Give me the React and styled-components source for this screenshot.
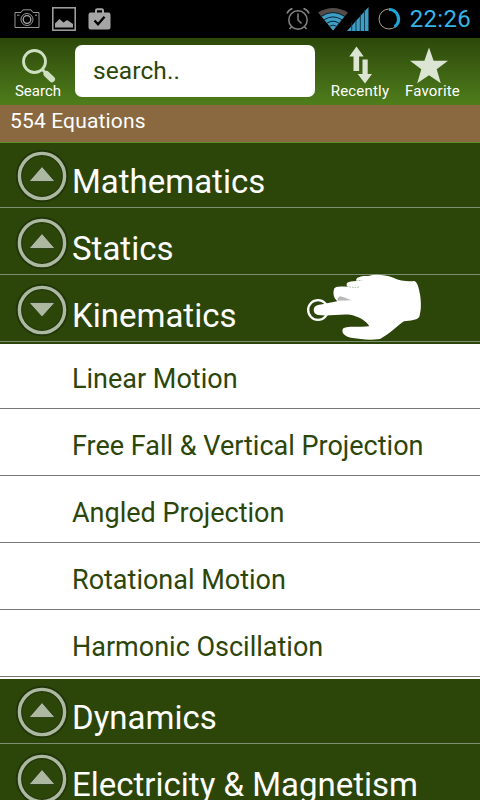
import React, { useState } from 'react';
import styled, { createGlobalStyle } from 'styled-components';

const topics = [
  { name: 'Mathematics', items: [] },
  { name: 'Statics', items: [] },
  {
    name: 'Kinematics',
    items: [
      'Linear Motion',
      'Free Fall & Vertical Projection',
      'Angled Projection',
      'Rotational Motion',
      'Harmonic Oscillation',
    ],
  },
  { name: 'Dynamics', items: [] },
  { name: 'Electricity & Magnetism', items: [] },
];

const CameraIcon = () => (
  <svg width="26" height="20" viewBox="0 0 26 20" fill="none" stroke="#a8a8a8">
    <path d="M1 3.5h6l2-2.7h8l2 2.7h6v15H1z" strokeWidth="0.9" />
    <circle cx="13" cy="10.5" r="6" strokeWidth="0.9" />
    <circle cx="13" cy="10.5" r="3.8" strokeWidth="1.3" />
    <path d="M3 6.2h2.5M21 6.2h2" strokeWidth="0.9" />
  </svg>
);

const GalleryIcon = () => (
  <svg width="24" height="24" viewBox="0 0 24 24">
    <rect x="0.8" y="0.8" width="22.4" height="22.4" fill="none" stroke="#a5a5a5" strokeWidth="1.5" />
    <path d="M3 20.5v-4l4.5-4.5 4 3.5 3.500-2.500 6 4v3.500z" fill="#a5a5a5" />
  </svg>
);

const BagIcon = () => (
  <svg width="23" height="22" viewBox="0 0 23 22">
    <path d="M8 5V2.5q0-1.2 1.2-1.2h4.6q1.2 0 1.2 1.2V5" fill="none" stroke="#a5a5a5" strokeWidth="2" />
    <rect x="0.5" y="4.5" width="22" height="17" rx="2.2" fill="#a5a5a5" />
    <path d="M6.5 12.5l3.5 3.7 6.5-7.5" fill="none" stroke="#000" strokeWidth="2.4" />
  </svg>
);

const AlarmIcon = () => (
  <svg width="24" height="24" viewBox="0 0 24 24" fill="none" stroke="#858585" strokeWidth="1.5">
    <circle cx="12" cy="13" r="9.2" />
    <path d="M12 6.5V13l3.5 3.5" />
    <path d="M1 6.5Q2.5 2.8 6.5 1.5M23 6.5Q21.5 2.8 17.5 1.5M5.8 19.5L3.5 22M18.2 19.5L20.5 22" />
  </svg>
);

const WifiIcon = () => (
  <svg width="30" height="24" viewBox="0 0 30 24" fill="none">
    <path d="M0 5.500Q15-3.500 30 5.500L15 23.500z" fill="#554b48" />
    <path d="M3.700 9.500Q15 2 26.300 9.500L15 23.500z" fill="#3d9dc4" />
    <path
      d="M3 9.500Q15 1.500 27 9.500M6 12.800Q15 7 24 12.800M9 16.200Q15 12.200 21 16.200M11.500 19.200Q15 17 18.500 19.200"
      stroke="#07222e"
      strokeWidth="1"
    />
  </svg>
);

const SignalIcon = () => (
  <svg width="22" height="24" viewBox="0 0 22 24">
    <path d="M0 24L21.5 0v24z" fill="#3d9dc4" />
    <path d="M4.7 15v9M9 12v12M13.3 7v17M17.5 3v21" stroke="#0b3346" strokeWidth="0.9" />
  </svg>
);

const BatteryIcon = () => (
  <svg width="24" height="24" viewBox="0 0 24 24" fill="none">
    <circle cx="12" cy="12" r="10" stroke="#a99f8e" strokeWidth="1" />
    <path d="M12 2.5A9.5 9.5 0 0 1 17.5 19.7" stroke="#1da4d8" strokeWidth="3.2" />
  </svg>
);

const SearchIcon = () => (
  <svg width="36" height="36" viewBox="0 0 36 36" fill="none">
    <circle cx="14.5" cy="13.500" r="11" stroke="#cfe0c2" strokeWidth="2.8" />
    <path d="M22 21l4 4.500" stroke="#cfe0c2" strokeWidth="2.8" />
    <path d="M26.500 26l5.500 5.200" stroke="#cfe0c2" strokeWidth="6" strokeLinecap="round" />
  </svg>
);

const RecentIcon = () => (
  <svg width="24" height="38" viewBox="0 0 24 38" fill="#dce5d3">
    <path d="M8.5 0.5l7.2 10h-4.6v14.500H5.500V10.500H1.300zM14.500 13.500h5.200v14.500h4.300L17 37.500 9.700 28h4.800z" />
  </svg>
);

const StarIcon = () => (
  <svg width="40" height="38" viewBox="0 0 40 38" fill="#dce5d3">
    <path d="M20 1.500l4.600 13.200H39L27.700 23.200l4.100 14.100L20 29.200 8.200 37.300l4.100-14.100L1 14.700h14.400z" />
  </svg>
);

const ToggleIcon = ({ open }) => (
  <svg width="54" height="54" viewBox="0 0 54 54">
    <circle cx="27" cy="27" r="23" fill="none" stroke="#1b2c0b" strokeWidth="6.5" opacity="0.6" />
    <circle cx="27" cy="27" r="22.600" fill="none" stroke="#adb8a0" strokeWidth="3.4" />
    <path
      d={open ? 'M14 19.500h26L27 34z' : 'M14 32.500h26L27 17.500z'}
      fill="#adb8a0"
      stroke="#1f3310"
      strokeWidth="0.8"
    />
  </svg>
);

const Hand = () => (
  <svg width="117" height="69" viewBox="45 24 351 207">
    <circle cx="84" cy="135" r="29.5" fill="none" stroke="#fff" strokeWidth="7" />
    <path
      d="M84 120C101 119 120 112 142 109C132 100 128 88 132 73C134 65 145 64 172 65C165 54 174 49 198 48C198 36 212 32 235 33C255 27 282 29 310 38C332 48 350 50 373 48C383 52 386 68 390 88C394 115 394 135 388 155C381 166 361 166 342 169C325 179 300 207 270 222C235 227 210 222 188 219C164 217 151 202 160 190C177 181 212 188 238 184C228 164 200 153 181 149C150 146 118 154 84 150C67 147 67 123 84 120Z"
      fill="#fff"
    />
    <path d="M142 107Q143 96 151 94Q168 99 184 106Q164 106 142 107Z" fill="#b8b8b8" />
    <path d="M170 64Q190 69 209 66M198 47L216 46" fill="none" stroke="#8c9a80" strokeWidth="2" strokeDasharray="5 3" />
  </svg>
);

const App = () => {
  const [openTopic, setOpenTopic] = useState('Kinematics');

  const handleToggle = (name) => {
    setOpenTopic(openTopic === name ? null : name);
  };

  return (
    <>
      <GlobalStyle />
      <Screen>
        <StatusBar>
          <Notifications>
            <CameraIcon />
            <GalleryIcon />
            <BagIcon />
          </Notifications>
          <SystemIcons>
            <AlarmIcon />
            <Connection>
              <WifiIcon />
              <SignalIcon />
            </Connection>
            <BatteryIcon />
            <Clock>22:26</Clock>
          </SystemIcons>
        </StatusBar>
        <Toolbar>
          <ToolButton $width={76}>
            <SearchIcon />
            <ToolLabel>Search</ToolLabel>
          </ToolButton>
          <SearchInput placeholder="search.." />
          <ToolButton $width={90}>
            <RecentIcon />
            <ToolLabel $spacing={0.2}>Recently</ToolLabel>
          </ToolButton>
          <ToolButton $width={55}>
            <StarIconWrapper>
              <StarIcon />
            </StarIconWrapper>
            <ToolLabel $spacing={0.2}>Favorite</ToolLabel>
          </ToolButton>
        </Toolbar>
        <Counter>554 Equations</Counter>
        <List>
          {topics.map(({ name, items }, index) => {
            const open = openTopic === name;
            const first = index === 0 || openTopic === topics[index - 1].name;
            return (
              <React.Fragment key={name}>
                <Topic $first={first} onClick={() => handleToggle(name)}>
                  <ToggleIcon open={open} />
                  <TopicName>{name}</TopicName>
                  {name === 'Kinematics' && (
                    <Pointer>
                      <Hand />
                    </Pointer>
                  )}
                </Topic>
                {open && items.length > 0 && (
                  <SubList>
                    {items.map((item) => (
                      <SubItem key={item}>{item}</SubItem>
                    ))}
                  </SubList>
                )}
              </React.Fragment>
            );
          })}
        </List>
      </Screen>
    </>
  );
};

export default App;

const GlobalStyle = createGlobalStyle`
  * {
    box-sizing: border-box;
  }

  body {
    margin: 0;
    overflow: hidden;
    font-family: Roboto, 'Noto Sans', sans-serif;
  }

  svg {
    display: block;
    flex-shrink: 0;
  }
`;

const Screen = styled.main`
  display: flex;
  flex-direction: column;
  width: 480px;
  height: 800px;
  overflow: hidden;
  background-color: #2c4509;
`;

const StatusBar = styled.header`
  display: flex;
  justify-content: space-between;
  flex-shrink: 0;
  height: 38px;
  padding: 0 9px 0 14px;
  background-color: #000;
`;

const Notifications = styled.div`
  display: flex;
  align-items: center;
  gap: 12px;
`;

const SystemIcons = styled.div`
  display: flex;
  align-items: center;
  gap: 8px;
`;

const Connection = styled.div`
  display: flex;
  padding-bottom: 1px;

  svg + svg {
    margin-left: -1px;
  }
`;

const Clock = styled.span`
  padding-left: 1px;
  font-size: 24px;
  letter-spacing: 0.3px;
  color: #35b4e5;
`;

const Toolbar = styled.nav`
  display: flex;
  flex-shrink: 0;
  height: 67px;
  background: linear-gradient(#2d480b, #4f7d1b);
`;

const ToolButton = styled.div`
  display: flex;
  flex-direction: column;
  align-items: center;
  justify-content: flex-end;
  width: ${(props) => props.$width}px;
  height: 61px;
`;

const StarIconWrapper = styled.div`
  padding-right: 8px;
`;

const ToolLabel = styled.span`
  margin-top: -1px;
  font-size: 15px;
  line-height: 16px;
  letter-spacing: ${(props) => props.$spacing || 0}px;
  color: #fff;
`;

const SearchInput = styled.input`
  width: 240px;
  height: 52px;
  margin: 7px 0 0 -1px;
  padding: 0 18px 2px;
  border: none;
  border-radius: 7px;
  background-color: #fff;
  font-family: inherit;
  font-size: 24.5px;
  letter-spacing: 0.1px;

  &::placeholder {
    color: #2c4509;
    opacity: 1;
  }
`;

const Counter = styled.div`
  flex-shrink: 0;
  height: 38px;
  padding-left: 10px;
  border-bottom: 1px solid #5d902a;
  background-color: #8a6840;
  font-size: 21px;
  line-height: 33px;
  letter-spacing: 0.15px;
  color: #fff;
`;

const List = styled.section`
  display: flex;
  flex-direction: column;
`;

const Topic = styled.div`
  position: relative;
  display: flex;
  align-items: flex-end;
  flex-shrink: 0;
  height: ${(props) => (props.$first ? 65 : 67)}px;
  padding: 0 0 4px 15px;
  border-bottom: 1px solid #7d8e72;
`;

const TopicName = styled.span`
  padding-left: 3px;
  font-size: 33px;
  line-height: 42px;
  white-space: nowrap;
  color: #fff;
`;

const Pointer = styled.div`
  position: absolute;
  top: -2px;
  left: 305px;
`;

const SubList = styled.div`
  flex-shrink: 0;
  padding-bottom: 2px;
  border-top: 2px solid #2c4509;
  background-color: #fff;
`;

const SubItem = styled.div`
  height: 67px;
  padding-left: 72px;
  border-bottom: 1px solid #777;
  font-size: 27px;
  line-height: 74px;
  color: #2c4509;

  &:first-child {
    height: 65px;
    line-height: 70px;
  }
`;
